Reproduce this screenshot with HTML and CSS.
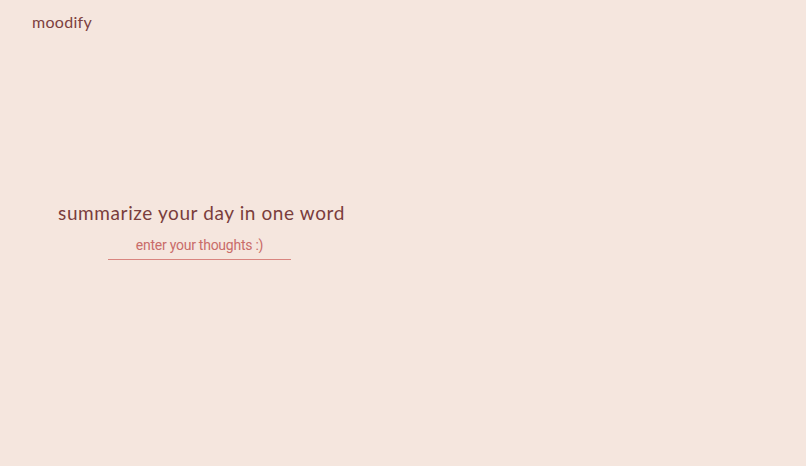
FILE: index.html
```html
<!DOCTYPE html>
<html lang="en">
<head>
<meta charset="utf-8">
<title>moodify</title>
<link rel="stylesheet" href="styles.css">
</head>
<body>
<div class="page">
  <header class="topbar">
    <span class="logo">moodify</span>
  </header>
  <main class="split">
    <section class="prompt">
      <h1 class="prompt-title">summarize your day in one word</h1>
      <input class="prompt-input" type="text" placeholder="enter your thoughts :)">
    </section>
    <section class="empty"></section>
  </main>
</div>
</body>
</html>
```

FILE: styles.css
```css
html, body {
  margin: 0;
  padding: 0;
  height: 100%;
}
body {
  background: #f5e6de;
  font-family: "Lato", "Noto Sans", sans-serif;
  color: #7a3d3c;
}
.page {
  position: relative;
  height: 100%;
}
.topbar {
  position: absolute;
  top: 0;
  left: 0;
  padding: 12px 32px;
}
.logo {
  font-size: 16px;
  letter-spacing: 0.3px;
  color: #7d4040;
}
.split {
  display: grid;
  grid-template-columns: 1fr 1fr;
  height: 100%;
}
.prompt {
  display: flex;
  flex-direction: column;
  align-items: center;
  justify-content: center;
  gap: 9px;
  padding-bottom: 6px;
}
.prompt-title {
  margin: 0;
  font-size: 19px;
  font-weight: 400;
  letter-spacing: 0.6px;
  color: #7a3d3c;
}
.prompt-input {
  width: 183px;
  box-sizing: border-box;
  margin-right: 4px;
  border: none;
  border-bottom: 1px solid #d9857f;
  background: transparent;
  font-family: "Roboto", "Liberation Sans", sans-serif;
  font-size: 14px;
  letter-spacing: -0.25px;
  text-align: center;
  padding: 4px 0 6px;
  color: #c76a68;
  outline: none;
}
.prompt-input::placeholder {
  color: #c96c69;
  opacity: 1;
}
```
